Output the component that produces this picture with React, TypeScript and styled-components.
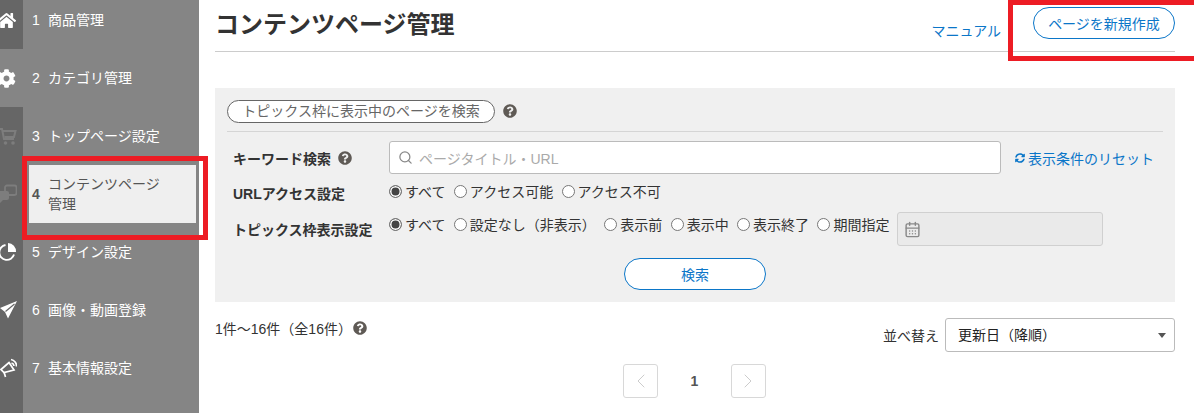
import React from 'react';
import styled, { createGlobalStyle } from 'styled-components';
import { FaHome, FaCog, FaQuestionCircle, FaSyncAlt } from 'react-icons/fa';
import { LuCalendarDays, LuChevronLeft, LuChevronRight, LuSearch } from 'react-icons/lu';

const GlobalStyle = createGlobalStyle`
  html, body {
    margin: 0;
    padding: 0;
    background: #fff;
    overflow: hidden;
  }
  body {
    font-family: "Liberation Sans", "Noto Sans CJK JP", sans-serif;
    font-size: 14px;
    color: #333;
  }
`;

const Page = styled.div`
  position: relative;
  display: flex;
  width: 1194px;
  height: 413px;
  overflow: hidden;
`;

const Sidebar = styled.nav`
  display: flex;
  flex-direction: column;
  flex: 0 0 199px;
  background: #858585;
`;

const NavItem = styled.div<{ $short?: boolean }>`
  display: flex;
  flex: 0 0 ${(p) => (p.$short ? '49px' : '58px')};
`;

const NavRail = styled.div<{ $light?: boolean; $short?: boolean }>`
  display: flex;
  align-items: center;
  flex: 0 0 23px;
  box-sizing: border-box;
  padding-bottom: ${(p) => (p.$short ? '9px' : '0')};
  overflow: hidden;
  background: ${(p) => (p.$light ? '#858585' : '#666')};
  svg {
    margin-left: -3px;
    flex: none;
  }
`;

const RailEnd = styled(NavRail)`
  flex: 1;
  width: 23px;
`;

const NavBody = styled.div<{ $active?: boolean; $short?: boolean }>`
  display: flex;
  align-items: center;
  flex: 1;
  gap: 9px;
  margin: ${(p) => (p.$active ? '0 3px 0 6px' : '0')};
  padding: ${(p) => (p.$active ? '0 0 0 3px' : '0 0 0 9px')};
  padding-bottom: ${(p) => (p.$short ? '9px' : '0')};
  background: ${(p) => (p.$active ? '#efefef' : 'transparent')};
  color: ${(p) => (p.$active ? '#555' : '#fff')};
  line-height: 20px;
`;

const NavNumber = styled.span<{ $active?: boolean }>`
  font-weight: ${(p) => (p.$active ? 700 : 400)};
  flex: none;
  width: 7px;
`;

const NavLabel = styled.span`
  width: 125px;
`;

const Main = styled.main`
  display: flex;
  flex-direction: column;
  flex: 1;
  padding: 0 19px 0 16px;
`;

const Header = styled.header`
  display: flex;
  align-items: flex-start;
  justify-content: space-between;
  height: 52px;
  box-sizing: border-box;
  border-bottom: 1px solid #ccc;
`;

const Title = styled.h1`
  margin: 7px 0 0;
  font-size: 24px;
  line-height: 36px;
  font-weight: 700;
  color: #333;
`;

const HeaderActions = styled.div`
  display: flex;
  align-items: flex-start;
  gap: 32px;
`;

const ManualLink = styled.a`
  margin-top: 21px;
  line-height: 21px;
  color: #0b76c8;
`;

const PillButton = styled.button`
  width: 142px;
  height: 32px;
  padding: 0;
  border: 1px solid #0b76c8;
  border-radius: 16px;
  background: #fff;
  color: #0b76c8;
  font: inherit;
`;

const NewPageButton = styled(PillButton)`
  margin-top: 7px;
`;

const SearchPanel = styled.section`
  display: flex;
  flex-direction: column;
  height: 214px;
  box-sizing: border-box;
  margin-top: 36px;
  padding: 12px 12px 0;
  background: #f0f0f0;
`;

const PanelHeading = styled.div`
  display: flex;
  align-items: center;
  gap: 8px;
  height: 32px;
  box-sizing: border-box;
  padding-bottom: 9px;
  border-bottom: 1px solid #d5d5d5;
`;

const ScopePill = styled.span`
  display: block;
  width: 268px;
  height: 23px;
  box-sizing: border-box;
  border: 1px solid #666;
  border-radius: 12px;
  background: #fff;
  color: #666;
  text-align: center;
  line-height: 20px;
`;

const HelpIcon = styled(FaQuestionCircle)`
  width: 14px;
  height: 14px;
  color: #5f5a55;
`;

const FilterGrid = styled.div`
  display: grid;
  grid-template-columns: 156px 1fr;
  grid-template-rows: 33px 38px 34px;
  margin: 9px 0 0;
  padding-left: 6px;
`;

const FilterLabel = styled.div`
  display: flex;
  align-items: center;
  gap: 7px;
  font-weight: 700;
  color: #333;
`;

const FilterValue = styled.div`
  display: flex;
  align-items: center;
`;

const KeywordBox = styled.div`
  display: flex;
  align-items: center;
  gap: 6px;
  width: 612px;
  height: 33px;
  box-sizing: border-box;
  padding-left: 8px;
  border: 1px solid #bbb;
  border-radius: 3px;
  background: #fff;
  color: #aaa;
  svg {
    color: #888;
  }
`;

const ResetLink = styled.a`
  display: flex;
  align-items: center;
  gap: 3px;
  margin-left: 14px;
  color: #0b76c8;
  svg {
    width: 10px;
    height: 10px;
  }
`;

const RadioGroup = styled.div<{ $lift: number }>`
  display: flex;
  align-items: center;
  gap: 8.4px;
  padding-bottom: ${(p) => p.$lift}px;
`;

const RadioOption = styled.label`
  display: flex;
  align-items: center;
  gap: 3px;
  color: #333;
  white-space: nowrap;
`;

const RadioMark = styled.span<{ $on?: boolean }>`
  display: block;
  width: 13px;
  height: 13px;
  box-sizing: border-box;
  border: 1px solid #777;
  border-radius: 50%;
  box-shadow: ${(p) => (p.$on ? 'inset 0 0 0 1.5px #fff' : 'none')};
  background: ${(p) => (p.$on ? '#444' : '#fff')};
`;

const DateField = styled.div`
  display: flex;
  align-items: center;
  width: 206px;
  height: 34px;
  box-sizing: border-box;
  margin-left: 8px;
  padding-left: 6px;
  border: 1px solid #d0d0d0;
  border-radius: 3px;
  background: #eaeaea;
  color: #888;
`;

const PanelActions = styled.div`
  display: flex;
  justify-content: center;
  margin-top: 12px;
`;

const ResultBar = styled.div`
  display: flex;
  justify-content: space-between;
  margin-top: 16px;
`;

const ResultCount = styled.div`
  display: flex;
  align-items: center;
  gap: 1px;
  height: 20px;
`;

const SortGroup = styled.div`
  display: flex;
  align-items: center;
  gap: 6px;
`;

const SortSelect = styled.div`
  position: relative;
  width: 230px;
  height: 34px;
  box-sizing: border-box;
  padding-left: 12px;
  border: 1px solid #bbb;
  border-radius: 3px;
  background: #fff;
  line-height: 32px;
  color: #222;
  &::after {
    content: '';
    position: absolute;
    right: 8px;
    top: 14px;
    border-left: 4px solid transparent;
    border-right: 4px solid transparent;
    border-top: 5px solid #555;
  }
`;

const Pager = styled.div`
  display: flex;
  align-items: center;
  justify-content: center;
  gap: 32.5px;
  margin-top: 12px;
  margin-right: 1px;
`;

const PagerButton = styled.span`
  display: flex;
  align-items: center;
  justify-content: center;
  width: 35px;
  height: 34px;
  box-sizing: border-box;
  border: 1px solid #d8d8d8;
  border-radius: 3px;
  color: #ccc;
`;

const PagerCurrent = styled.span`
  font-weight: 700;
  color: #555;
`;

const Annotation = styled.div<{ $x: number; $y: number; $w: number; $h: number }>`
  position: absolute;
  left: ${(p) => p.$x}px;
  top: ${(p) => p.$y}px;
  width: ${(p) => p.$w}px;
  height: ${(p) => p.$h}px;
  box-sizing: border-box;
  border: 5px solid #ed1c24;
`;

const DIM = '#7d7d7d';

// sidebar glyphs are drawn so that x=0 sits on the page edge, like the clipped originals
const CartIcon = () => (
  <svg width="20" height="20" viewBox="-3 0 20 20" fill="none" stroke={DIM} strokeWidth="2">
    <path d="M-2 3h4l2 10h10" />
    <path d="M3 5h12.5l-1.5 6H4.5" />
    <circle cx="5.5" cy="17" r="1.8" fill={DIM} stroke="none" />
    <circle cx="13" cy="17" r="1.8" fill={DIM} stroke="none" />
  </svg>
);

const CommentIcon = () => (
  <svg width="20" height="20" viewBox="-3 0 20 20" fill="none">
    <rect x="5" y="1.5" width="11.5" height="9.5" rx="2" stroke={DIM} strokeWidth="1.8" />
    <path d="M-3 7h10a2 2 0 0 1 2 2v5a2 2 0 0 1-2 2H3l-3 3v-3h-3z" fill={DIM} />
  </svg>
);

const PieIcon = () => (
  <svg width="20" height="20" viewBox="-3 0 20 20" fill="none">
    <path d="M5.5 3A7.5 7.5 0 1 0 14 12.5" stroke="#fff" strokeWidth="1.9" />
    <path d="M8 1a8.5 8.5 0 0 1 8 9H8z" fill="#fff" />
  </svg>
);

const PlaneIcon = () => (
  <svg width="20" height="20" viewBox="-3 0 20 20">
    <path d="M17 1L0 8l5 4 3 6.5z" fill="#fff" />
    <path d="M14.5 4L5.5 11.5" stroke="#666" strokeWidth="1.2" />
  </svg>
);

const HornIcon = () => (
  <svg width="20" height="20" viewBox="-3 0 20 20" fill="none" stroke="#fff" strokeWidth="1.7">
    <path d="M1 11.5l8-7 5 7.5-10 2.5z" />
    <path d="M4 14l1.5 5" />
    <path d="M11 1.5A6.5 6.5 0 0 1 16.5 8.5" />
    <path d="M11.5 5a3.5 3.5 0 0 1 2.5 3" />
  </svg>
);

const navItems = [
  { no: '1', label: '商品管理', icon: <FaHome size={19} color="#fff" /> },
  { no: '2', label: 'カテゴリ管理', icon: <FaCog size={19} color="#fff" />, light: true },
  { no: '3', label: 'トップページ設定', icon: <CartIcon /> },
  { no: '4', label: 'コンテンツページ管理', icon: <CommentIcon />, active: true },
  { no: '5', label: 'デザイン設定', icon: <PieIcon /> },
  { no: '6', label: '画像・動画登録', icon: <PlaneIcon /> },
  { no: '7', label: '基本情報設定', icon: <HornIcon /> },
];

const urlOptions = ['すべて', 'アクセス可能', 'アクセス不可'];
const topicOptions = ['すべて', '設定なし\uFF08非表示\uFF09', '表示前', '表示中', '表示終了', '期間指定'];

const App = () => {
  return (
    <Page>
      <GlobalStyle />
      <Sidebar>
        {navItems.map((item, i) => (
          <NavItem key={item.no} $short={i === 0}>
            <NavRail $light={item.light} $short={i === 0}>
              {item.icon}
            </NavRail>
            <NavBody $active={item.active} $short={i === 0}>
              <NavNumber $active={item.active}>{item.no}</NavNumber>
              <NavLabel>{item.label}</NavLabel>
            </NavBody>
          </NavItem>
        ))}
        <RailEnd />
      </Sidebar>
      <Main>
        <Header>
          <Title>コンテンツページ管理</Title>
          <HeaderActions>
            <ManualLink>マニュアル</ManualLink>
            <NewPageButton>ページを新規作成</NewPageButton>
          </HeaderActions>
        </Header>
        <SearchPanel>
          <PanelHeading>
            <ScopePill>トピックス枠に表示中のページを検索</ScopePill>
            <HelpIcon />
          </PanelHeading>
          <FilterGrid>
            <FilterLabel>
              キーワード検索
              <HelpIcon />
            </FilterLabel>
            <FilterValue>
              <KeywordBox>
                <LuSearch size={15} />
                ページタイトル・URL
              </KeywordBox>
              <ResetLink>
                <FaSyncAlt />
                表示条件のリセット
              </ResetLink>
            </FilterValue>
            <FilterLabel>URLアクセス設定</FilterLabel>
            <FilterValue>
              <RadioGroup $lift={4}>
                {urlOptions.map((o, i) => (
                  <RadioOption key={o}>
                    <RadioMark $on={i === 0} />
                    {o}
                  </RadioOption>
                ))}
              </RadioGroup>
            </FilterValue>
            <FilterLabel>トピックス枠表示設定</FilterLabel>
            <FilterValue>
              <RadioGroup $lift={10}>
                {topicOptions.map((o, i) => (
                  <RadioOption key={o}>
                    <RadioMark $on={i === 0} />
                    {o}
                  </RadioOption>
                ))}
              </RadioGroup>
              <DateField>
                <LuCalendarDays size={17} />
              </DateField>
            </FilterValue>
          </FilterGrid>
          <PanelActions>
            <PillButton>検索</PillButton>
          </PanelActions>
        </SearchPanel>
        <ResultBar>
          <ResultCount>
            {'1件\uFF5E16件\uFF08全16件\uFF09'}
            <HelpIcon />
          </ResultCount>
          <SortGroup>
            並べ替え
            <SortSelect>{'更新日\uFF08降順\uFF09'}</SortSelect>
          </SortGroup>
        </ResultBar>
        <Pager>
          <PagerButton>
            <LuChevronLeft size={24} strokeWidth={1} />
          </PagerButton>
          <PagerCurrent>1</PagerCurrent>
          <PagerButton>
            <LuChevronRight size={24} strokeWidth={1} />
          </PagerButton>
        </Pager>
      </Main>
      <Annotation $x={22} $y={156} $w={186} $h={84} />
      <Annotation $x={1008} $y={0} $w={191} $h={61} />
    </Page>
  );
};

export default App;
